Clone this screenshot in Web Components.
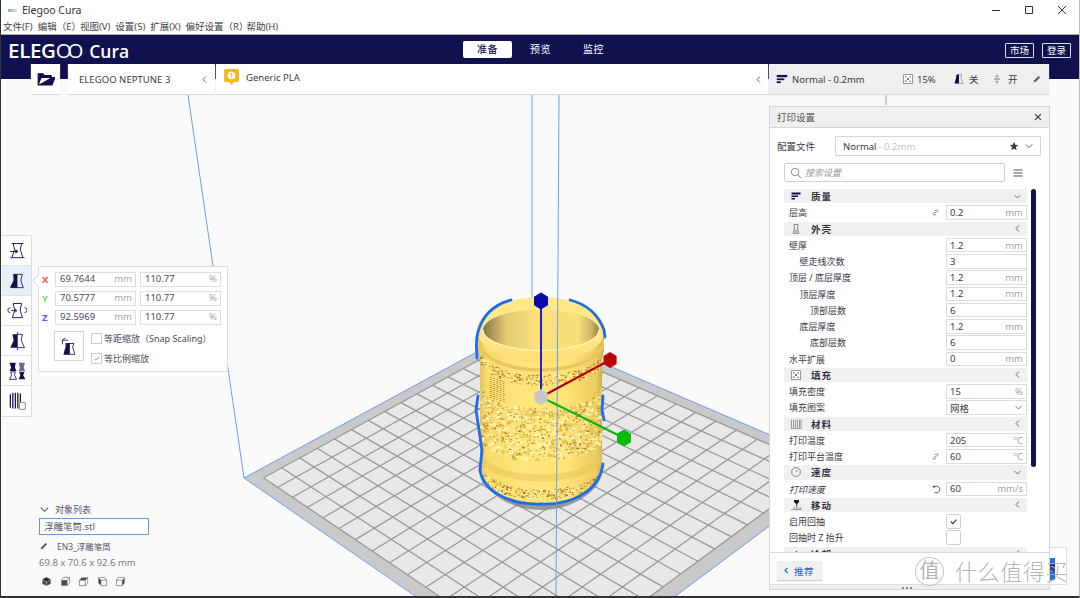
<!DOCTYPE html>
<html lang="zh"><head><meta charset="utf-8"><title>Elegoo Cura</title>
<style>
html,body{margin:0;padding:0;width:1080px;height:598px;overflow:hidden;background:#fafafa;font-family:"Noto Sans","Noto Sans CJK SC",sans-serif;color:#3a3a46}
x-app{display:flex}
</style></head><body>
<x-app>
  <x-titlebar>Elegoo Cura</x-titlebar>
  <x-menubar></x-menubar>
  <x-header></x-header>
  <x-stage>
    <x-scene></x-scene>
    <x-stagebar></x-stagebar>
    <x-toolrail></x-toolrail>
    <x-scalepanel></x-scalepanel>
    <x-objectlist></x-objectlist>
    <x-slicebox></x-slicebox>
    <x-printsettings>
      <x-cat icon="quality" open>质量</x-cat>
      <x-row link value="0.2" unit="mm">层高</x-row>
      <x-cat icon="shell">外壳</x-cat>
      <x-row value="1.2" unit="mm">壁厚</x-row>
      <x-row indent="1" value="3">壁走线次数</x-row>
      <x-row value="1.2" unit="mm">顶层 / 底层厚度</x-row>
      <x-row indent="1" value="1.2" unit="mm">顶层厚度</x-row>
      <x-row indent="2" value="6">顶部层数</x-row>
      <x-row indent="1" value="1.2" unit="mm">底层厚度</x-row>
      <x-row indent="2" value="6">底部层数</x-row>
      <x-row value="0" unit="mm">水平扩展</x-row>
      <x-cat icon="infill">填充</x-cat>
      <x-row value="15" unit="%">填充密度</x-row>
      <x-row select value="网格">填充图案</x-row>
      <x-cat icon="material">材料</x-cat>
      <x-row value="205" unit="°C">打印温度</x-row>
      <x-row link value="60" unit="°C">打印平台温度</x-row>
      <x-cat icon="speed" open>速度</x-cat>
      <x-row reset italic value="60" unit="mm/s">打印速度</x-row>
      <x-cat icon="travel">移动</x-cat>
      <x-row check="on">启用回抽</x-row>
      <x-row check="off">回抽时 Z 抬升</x-row>
      <x-cat icon="cooling">冷却</x-cat>
    </x-printsettings>
    <x-watermark></x-watermark>
  </x-stage>
</x-app>
<script>
const NAVY='#12114f';
const P={
 move:`<path d="M5.500 3H19.500M7.500 3L9 10L6 20M17.500 3L16 10L19 20M4 20H21" fill="none" stroke="${NAVY}" stroke-width="1.100"/><path d="M4 12.500H12M10 10.500L12.500 12.500L10 14.500" fill="none" stroke="${NAVY}" stroke-width="1.300"/>`,
 scale:`<path d="M7.500 4H18.500L16.500 11L19.500 20H6.500L9.200 11Z" fill="none" stroke="${NAVY}" stroke-width="1"/><path d="M8.800 4H12.500V20H3.500L7.500 12Z" fill="${NAVY}"/>`,
 rotate:`<path d="M7.500 3H17.500L15.800 11L18.500 20H6.500L9.200 11Z" fill="none" stroke="${NAVY}" stroke-width="1.100"/><path d="M4 8A3 3 0 1 0 4 14M21 8A3 3 0 1 1 21 14M5 11.500H11M9.500 9.500L12 11.500L9.500 13.500" fill="none" stroke="${NAVY}" stroke-width="1"/>`,
 mirror:`<path d="M12.500 1V23" stroke="${NAVY}" stroke-width="1"/><path d="M6.500 4H12V20H4L8 11Z" fill="${NAVY}"/><path d="M13 4H18.500L17 11L21 20H13" fill="none" stroke="${NAVY}" stroke-width="1"/>`,
 support:`<path d="M3 2H10.500L9.500 8L11.500 12H3L5 8Z" fill="${NAVY}"/><path d="M14 2H21.500L20 8L22 12H14L15.500 8Z" fill="#6d6d8c"/><path d="M4.500 13H10L9 17L11.500 22H3L5.500 17Z" fill="none" stroke="${NAVY}" stroke-width="1"/><path d="M14.500 13H21L19.500 17L22 22H14L16 17Z" fill="${NAVY}"/>`,
 per:`<path d="M4 4V20M7 2V21M10 2V21M13 2V21M16 3V14" stroke="${NAVY}" stroke-width="1.500"/><path d="M15 14H22V22H15Z" fill="#fff" stroke="#8b8b9e" stroke-width="1.200"/>`,
 snap:`<path d="M8 9H18L16.300 13L19 22H6L8.700 13Z" fill="none" stroke="${NAVY}" stroke-width="1"/><path d="M8.800 9H13V22H5.500L8 13Z" fill="${NAVY}"/><path d="M4 10V5H11M7.500 2.500L4 5" fill="none" stroke="${NAVY}" stroke-width="1"/>`,
 folder:`<path d="M1.500 20V5H8L10 7.500H19V10H5.500L1.500 20H20L24 10H19" fill="${NAVY}" stroke="${NAVY}" stroke-width="1.400" stroke-linejoin="round"/>`,
 quality:`<path d="M3 5H21V9H3Z" fill="${NAVY}"/><path d="M3 11H16V14H3Z" fill="${NAVY}"/><path d="M3 16H10V19H3Z" fill="${NAVY}"/>`,
 shell:`<path d="M8 3H16L15 10L18 21H6L9 10Z" fill="none" stroke="#6a6a78" stroke-width="1.500"/><path d="M6 21L9 13H15L18 21Z" fill="#b4b4bc"/>`,
 infill:`<path d="M3 3H21V21H3Z" fill="#fff" stroke="#77778a" stroke-width="1.500"/><path d="M6 6L10 6L8 10ZM18 6V10L14 8ZM6 18V14L10 16ZM18 18H14L16 14ZM10 10H14V14H10Z" fill="#77778a"/>`,
 material:`<path d="M3 3V21M7 3V21M11 3V21M15 3V21M19 3V21M22 3V21" stroke="#666672" stroke-width="1.300"/><path d="M2 21H23" stroke="#666672" stroke-width="1"/>`,
 speed:`<circle cx="12" cy="12" r="9" fill="none" stroke="#5a5a68" stroke-width="1.300"/><path d="M12 12L16 7" stroke="#5a5a68" stroke-width="1.500"/><path d="M12 4V6M20 12H18M4 12H6" stroke="#5a5a68" stroke-width="1"/>`,
 travel:`<path d="M8 2H18V6L14.500 10V15H12.500V10L8 6Z" fill="${NAVY}"/><path d="M2 21H22V18H9L6 16" fill="none" stroke="#8a8a96" stroke-width="1.800"/>`,
 cooling:`<path d="M12 12C8 4 18 3 13 11C22 9 21 18 13 13C14 22 5 20 11 13C3 15 3 6 12 12Z" fill="#5a5a68"/>`,
 star:`<path d="M12 2L15 9L22 9.700L16.800 14.500L18.300 22L12 18L5.700 22L7.200 14.500L2 9.700L9 9Z" fill="#3a3a4a"/>`,
 down:`<path d="M4 8L12 16L20 8" fill="none" stroke="#555" stroke-width="2.200"/>`,
 left:`<path d="M16 4L8 12L16 20" fill="none" stroke="#555" stroke-width="2.400"/>`,
 leftblue:`<path d="M15 5L8 12L15 19" fill="none" stroke="#1f63c4" stroke-width="3"/>`,
 search:`<circle cx="10" cy="10" r="7.500" fill="none" stroke="#777" stroke-width="1.600"/><path d="M15.500 15.500L22 22" stroke="#777" stroke-width="1.800"/>`,
 menu:`<path d="M3 6H21M3 12H21M3 18H21" stroke="#555" stroke-width="2.400"/>`,
 close:`<path d="M5 5L19 19M19 5L5 19" stroke="#444" stroke-width="3"/>`,
 link:`<path d="M11 13L14 10M9 12L6 15A3 3 0 0 0 10 19L13 16M15 12L18 9A3 3 0 0 0 14 5L11 8" fill="none" stroke="#6a6a6a" stroke-width="2.200"/>`,
 reset:`<path d="M7 8A8 8 0 1 1 9 20" fill="none" stroke="#555" stroke-width="2.300"/><path d="M3 5L9 3.500L8 11Z" fill="#555"/>`,
 pencil:`<path d="M4 20L5.500 15L16 4.500L19.500 8L9 18.500Z" fill="#55555f"/>`,
 check:`<path d="M6 12L10.500 16.500L18.500 8" fill="none" stroke="#3a3a4a" stroke-width="2.600"/>`,
 checkblue:`<path d="M6 12L10.500 16.500L18.500 8" fill="none" stroke="#5c8fdc" stroke-width="2.200"/>`,
 cubeFull:`<path d="M12 2L21 7V17L12 22L3 17V7Z" fill="#4a4a55"/><path d="M12 12V22M3 7L12 12L21 7" stroke="#fff" stroke-width="1"/>`,
 cubeFront:`<path d="M3 9H16V21H3Z" fill="#4a4a55"/><path d="M3 9L8 3H21V15L16 21M16 9L21 3" fill="none" stroke="#55555f" stroke-width="1.300"/>`,
 cubeTop:`<path d="M3 9L8 3H21L16 9Z" fill="#4a4a55"/><path d="M3 9H16V21H3ZM16 9L21 3V15L16 21" fill="none" stroke="#55555f" stroke-width="1.300"/>`,
 cubeLeft:`<path d="M3 3L9 9V21L3 15Z" fill="#4a4a55"/><path d="M3 3H16L21 9V21H9M9 9H21" fill="none" stroke="#55555f" stroke-width="1.300"/>`,
 cubeRight:`<path d="M16 9L21 3V15L16 21Z" fill="#4a4a55"/><path d="M3 9L8 3H21M3 9H16V21H3Z" fill="none" stroke="#55555f" stroke-width="1.300"/>`,
 support2:`<path d="M7 3H12V21H6L3 21L6 10Z" fill="${NAVY}"/><path d="M12 3H17L16 10L20 21H12" fill="none" stroke="#8a8a96" stroke-width="1.400"/>`,
 split:`<path d="M12 3V8M12 16V21M6 12H18" stroke="#6a7488" stroke-width="2"/><path d="M9 6L12 9L15 6M9 18L12 15L15 18" fill="none" stroke="#6a7488" stroke-width="1.200"/>`
};
const ic=(n,w=16,h=w)=>`<svg width="${w}" height="${h}" viewBox="0 0 24 24" style="display:block;flex:none">${P[n]}</svg>`;
function def(tag,html){
  customElements.define(tag,class extends HTMLElement{
    constructor(){super();const r=this.attachShadow({mode:'open'});r.innerHTML=typeof html==='function'?html(this):html}
  });
}
const FONT='"Noto Sans","Noto Sans CJK SC",sans-serif';

def('x-app',`<style>:host{display:flex;flex-direction:column;width:1080px;height:598px;overflow:hidden;font-family:${FONT};box-sizing:border-box;border-left:1px solid #333;border-right:1px solid #bbb;border-bottom:2px solid #333}</style><slot></slot>`);

def('x-titlebar',`<style>
:host{display:flex;align-items:center;height:20px;background:#fff;font-size:10.500px;color:#333;flex:none}
.logo{width:9px;height:3px;margin:0 5px 0 7px;background:linear-gradient(90deg,#8aa0d8,#dde6f6)}
.sp{flex:1}.w{display:flex;align-items:center;justify-content:center;width:33px;height:20px}
.w:last-child{margin-right:1px}
</style><i class="logo"></i><slot></slot><span class="sp"></span>
<span class="w"><svg width="10" height="10" viewBox="0 0 10 10"><path d="M1 5.500H9" stroke="#333" stroke-width="1"/></svg></span>
<span class="w"><svg width="10" height="10" viewBox="0 0 10 10"><path d="M1.500 1.500H8.500V8.500H1.500Z" fill="none" stroke="#333" stroke-width="1"/></svg></span>
<span class="w"><svg width="10" height="10" viewBox="0 0 10 10"><path d="M1 1L9 9M9 1L1 9" stroke="#333" stroke-width="1"/></svg></span>`);

def('x-menubar',`<style>
:host{display:flex;height:14px;background:#fff;font-size:9.500px;line-height:14px;color:#444;padding-left:2px;flex:none;white-space:nowrap;gap:5px;border-bottom:1px solid #a8a8b0}
.a{margin-right:-6px}.b{margin-right:-7px}
</style><span>文件(F)</span><span class="a">编辑（E）</span><span>视图(V)</span><span>设置(S)</span><span>扩展(X)</span><span class="b">偏好设置（R）</span><span>帮助(H)</span>`);

def('x-header',`<style>
:host{display:flex;align-items:flex-start;height:44px;background:${NAVY};color:#fff;position:relative;flex:none;margin-bottom:-44px;z-index:1}
.logo{position:absolute;left:7px;top:1px;display:flex;align-items:baseline;font:600 20.500px/28px "Open Sans",sans-serif;letter-spacing:-.3px;white-space:nowrap}
.oo{letter-spacing:-4.200px;font-weight:400;margin-right:10px}
.cura{font:600 17.500px/28px "Open Sans",sans-serif;letter-spacing:0}
.tabs{position:absolute;left:462px;top:6px;display:flex;font-size:10px;line-height:17px}
.tabs span{width:49px;height:17px;text-align:center;border-radius:2px;margin-right:4px;letter-spacing:.6px}
.tabs .on{background:#fff;color:${NAVY};font-weight:500}
.btns{position:absolute;left:1004px;top:8px;display:flex;gap:8px}
.btns span{width:27px;height:13px;border:1px solid #dcdcec;border-radius:1px;text-align:center;font-size:9.500px;line-height:13px}
</style>
<div class="logo"><span>ELEG</span><span class="oo">OO</span><span class="cura">Cura</span></div>
<div class="tabs"><span class="on">准备</span><span>预览</span><span>监控</span></div>
<div class="btns"><span>市场</span><span>登录</span></div>`);

def('x-stage',`<style>:host{display:block;position:relative;flex:1;min-height:0;overflow:hidden}</style><slot></slot>`);

def('x-stagebar',`<style>
:host{position:absolute;left:30px;top:29px;display:flex;height:30px;z-index:2;font-size:9.500px;color:#3a3a46}
.b{background:#fff;display:flex;align-items:center;height:30px;box-shadow:0 1px 1px #dcdcdc}
.f{width:29px;justify-content:center;margin-right:8px}
.p{width:147px;box-sizing:border-box;padding:0 6px 0 11px;justify-content:space-between;letter-spacing:.05px;margin-right:1px}
.m{width:552px;box-sizing:border-box;padding:0 5px 0 8px;margin-right:1px}
.m .t{margin-left:7px;flex:1;margin-top:-3px}
.q{width:280px;box-sizing:border-box;background:#efefef;padding:0 7px 0 6px;font-size:9.500px}
.q span{white-space:nowrap}
</style>
<div class="b f">${ic('folder',18)}</div>
<div class="b p"><span>ELEGOO NEPTUNE 3</span>${ic('left',9)}</div>
<div class="b m"><svg width="15" height="17" viewBox="0 0 15 17" style="margin-top:-3px;flex:none"><path d="M0 1.500Q0 0 1.500 0H13.500Q15 0 15 1.500V11.500Q15 13 13.500 13H10L7.500 16L5 13H1.500Q0 13 0 11.500Z" fill="#f5b922"/><circle cx="7.500" cy="6.500" r="3.800" fill="#fff"/><text x="7.500" y="9" font-size="6.500" text-anchor="middle" fill="#c08a10" font-family="Noto Sans">1</text></svg><span class="t">Generic PLA</span>${ic('left',9)}</div>
<div class="b q">${ic('quality',14)}<span style="margin-left:3px;width:110px">Normal - 0.2mm</span>${ic('infill',12)}<span style="margin-left:3px;width:36px">15%</span>${ic('support2',12)}<span style="margin-left:4px;width:22px">关</span>${ic('split',12)}<span style="margin-left:5px;width:24px">开</span>${ic('pencil',10)}</div>`);

const rail=['move','scale','rotate','mirror','support','per'];
def('x-toolrail',`<style>
:host{position:absolute;left:1px;top:200px;width:29px;background:#fff;border:1px solid #dcdcdc;border-left:0;z-index:2;border-radius:0 2px 2px 0;display:flex;flex-direction:column}
div{height:30px;display:flex;align-items:center;justify-content:center;border-bottom:1px solid #e2e2e2;box-sizing:border-box}
div:last-child{border:0}.on{background:#e5f0fa}
</style>${rail.map((n,i)=>`<div class="${i==1?'on':''}">${ic(n,20)}</div>`).join('')}`);

def('x-scalepanel',`<style>
:host{position:absolute;left:37px;top:231px;width:190px;height:106px;box-sizing:border-box;background:#fff;border:1px solid #dcdcdc;z-index:2;font-size:10px;color:#4a4a55}
.n{position:absolute;left:-5px;top:9px;width:8px;height:8px;background:#fff;border-left:1px solid #dcdcdc;border-bottom:1px solid #dcdcdc;transform:rotate(45deg)}
.g{display:grid;grid-template-columns:9px 81px 81px;gap:4px;margin:5px 0 0 3px;position:relative}
.a{font-weight:700;font-size:9.500px;line-height:15px}
.f{height:15px;box-sizing:border-box;border:1px solid #dedede;display:flex;justify-content:space-between;padding:0 3px 0 4px;line-height:12px;font-size:9.500px}
.f b{font-weight:400;color:#a8a8a8}
.l{display:flex;margin:6px 0 0 15px;position:relative}
.s{width:30px;height:30px;box-sizing:border-box;border:1px solid #d6d6d6;display:flex;align-items:center;justify-content:center;margin-right:7px}
.c{display:flex;align-items:center;height:11px;margin:2px 0 9px;font-size:9px;white-space:nowrap}
.c i{width:11px;height:11px;box-sizing:border-box;border:1px solid #ccc;margin-right:2px;display:flex}
</style><span class="n"></span>
<div class="g">
${[['X','#ee5555','69.7644'],['Y','#77dd55','70.5777'],['Z','#5555ee','92.5969']].map(r=>`<span class="a" style="color:${r[1]}">${r[0]}</span><span class="f">${r[2]}<b>mm</b></span><span class="f">110.77<b>%</b></span>`).join('')}
</div>
<div class="l"><div class="s">${ic('snap',20)}</div><div><div class="c"><i></i>等距缩放（Snap Scaling）</div><div class="c"><i>${ic('checkblue',9)}</i>等比例缩放</div></div></div>`);

def('x-objectlist',`<style>
:host{position:absolute;left:38px;top:466px;width:140px;z-index:2;font-size:9.500px;color:#55555f}
.h{display:flex;align-items:center;height:17px;white-space:nowrap;font-size:9px}
.h span{margin-left:5px}
.i{width:110px;height:17px;box-sizing:border-box;border:1px solid #5d9be8;background:#fff;padding:0 4px;line-height:15px;font-size:9.500px}
.e{display:flex;align-items:center;height:16px;margin-top:3px;font-size:8.500px;white-space:nowrap}
.e span{margin-left:8px}
.d{font-size:9.500px;margin-top:1px;height:16px;line-height:16px;color:#7a7a82;white-space:nowrap}
.v{display:flex;gap:7.500px;margin:5px 0 0 2px}
</style>
<div class="h">${ic('down',11)}<span>对象列表</span></div>
<div class="i">浮雕笔筒.stl</div>
<div class="e">${ic('pencil',10)}<span>EN3_浮雕笔筒</span></div>
<div class="d">69.8 x 70.6 x 92.6 mm</div>
<div class="v">${['cubeFull','cubeFront','cubeTop','cubeLeft','cubeRight'].map(n=>ic(n,11)).join('')}</div>`);

def('x-slicebox',`<style>
:host{position:absolute;left:1048px;top:512px;width:18px;height:38px;box-sizing:border-box;background:#fff;border:1px solid #ddd;border-left:0;z-index:1;overflow:hidden}
b{position:absolute;left:1px;top:10px;width:5px;height:22px;background:#1f6fe0}
i{position:absolute;left:1px;top:16px;width:5px;height:8px;background:#2a3f90}
</style><b></b><i></i>`);

def('x-printsettings',`<style>
:host{position:absolute;left:768px;top:71px;width:281px;height:484px;box-sizing:border-box;background:#fff;border:1px solid #d6d6d6;z-index:3;display:flex;flex-direction:column;font-size:9.500px;color:#3a3a46}
.t{height:21px;background:#efefef;border-bottom:1px solid #d6d6d6;display:flex;align-items:center;justify-content:space-between;padding:0 6px 0 7px;flex:none;color:#555;box-sizing:border-box}
.p{display:flex;align-items:center;height:20px;margin-top:8px;padding-left:7px;flex:none}
.dd{width:206px;height:20px;margin-left:20px;box-sizing:border-box;border:1px solid #d6d6d6;border-radius:1px;display:flex;align-items:center;padding:0 6px 0 7px;font-size:9.500px}
.dd em{font-style:normal;color:#c4c4c4;margin-left:2px;flex:1}
.s{display:flex;align-items:center;height:19px;margin-top:7px;padding-left:14px;flex:none}
.si{width:221px;height:19px;box-sizing:border-box;border:1px solid #d0d0d0;border-radius:2px;display:flex;align-items:center;padding-left:5px;font-style:italic;color:#9a9a9a;font-size:9px}
.si span{margin-left:3px}
.ls{height:363px;margin-top:7px;position:relative;overflow:hidden;flex:none;padding-left:14px}
.g{width:243px;display:grid;grid-auto-rows:16.250px}
.sb{position:absolute;left:261px;top:0;width:5px;height:278px;background:${NAVY};border-radius:3px}
.f{flex:none;height:32px;border-top:1px solid #dcdcdc;box-sizing:border-box;padding:8px 0 0 7px}
.r{display:flex;align-items:center;width:45px;height:19px;background:#f0f0f0;box-shadow:0 1px 1px #d0d0d0;color:#2a62bc;font-size:9.500px;letter-spacing:.5px;padding-left:5px;box-sizing:border-box}
.r span{margin-left:3px}
.e{flex:1;background:#efefef;border-top:1px solid #dcdcdc;position:relative}
.e i{position:absolute;left:132px;top:2px;width:11px;height:2px;background:radial-gradient(circle at 1px 1px,#888 1px,transparent 1.200px) 0 0/4px 2px}
</style>
<div class="t"><span>打印设置</span>${ic('close',10)}</div>
<div class="p"><span>配置文件</span><div class="dd">Normal<em>- 0.2mm</em>${ic('star',10)}<span style="width:5px"></span>${ic('down',10)}</div></div>
<div class="s"><div class="si">${ic('search',12)}<span>搜索设置</span></div><span style="margin-left:7px">${ic('menu',12)}</span></div>
<div class="ls"><div class="g"><slot></slot></div><div class="sb"></div></div>
<div class="f"><div class="r">${ic('leftblue',9)}<span>推荐</span></div></div>
<div class="e"><i></i></div>`);

def('x-cat',h=>`<style>
:host{display:block;box-sizing:border-box;height:16.250px;padding-bottom:2px}
.b{display:flex;align-items:center;height:14.250px;background:#f0f0f0;padding:0 5px 0 6px}
.t{margin-left:9px;flex:1;font-weight:700;font-size:9.500px;letter-spacing:1px;color:#33333f}
</style><div class="b">${ic(h.getAttribute('icon'),12)}<span class="t"><slot></slot></span>${ic(h.hasAttribute('open')?'down':'left',9)}</div>`);

def('x-row',h=>{
 const g=a=>h.getAttribute(a),ind=+(g('indent')||0);
 let ctl;
 if(g('check'))ctl=`<div class="ck">${g('check')=='on'?ic('check',11):''}</div>`;
 else if(h.hasAttribute('select'))ctl=`<div class="fd">${g('value')}${ic('down',9)}</div>`;
 else ctl=`<div class="fd"><span>${g('value')}</span><b>${g('unit')||''}</b></div>`;
 return `<style>
:host{display:flex;align-items:flex-start;height:16.250px;font-size:9px;color:#3a3a46;white-space:nowrap;${h.hasAttribute('italic')?'font-style:italic;':''}}
.l{width:${162-5-ind*10.500}px;margin-left:${5+ind*10.500}px;line-height:15px;display:flex}
.a{width:10px;margin-right:5px;height:15px;display:flex;align-items:center}
.sp{flex:1}
.fd{width:81px;height:14.500px;box-sizing:border-box;border:1px solid #dcdcdc;background:#fff;display:flex;justify-content:space-between;align-items:center;padding:0 3px 0 3px;font-size:9.500px;font-style:normal}
.fd b{font-weight:400;color:#a2a2a2}
.ck{width:15px;height:15px;box-sizing:border-box;border:1px solid #d0d0d0;border-radius:2px;display:flex;align-items:center;justify-content:center;background:#fff}
</style><span class="l"><span><slot></slot></span><span class="sp"></span>${h.hasAttribute('link')?`<span class="a">${ic('link',9)}</span>`:h.hasAttribute('reset')?`<span class="a">${ic('reset',10)}</span>`:''}</span>${ctl}`;
});

def('x-watermark',`<style>
:host{position:absolute;left:914px;top:521px;z-index:5;display:flex;align-items:center;pointer-events:none;color:rgba(170,170,170,.9);white-space:nowrap}
.c{width:29px;height:29px;border:1.500px solid rgba(185,185,185,.8);border-radius:50%;box-sizing:border-box;font-size:20px;line-height:25px;text-align:center;background:rgba(255,255,255,.5)}
.t{margin-left:11px;font-size:22px;line-height:30px;letter-spacing:.6px;font-weight:300}
</style><span class="c">值</span><span class="t">什么值得买</span>`);

/* 3D scene */
def('x-scene',()=>{
 const H=(p)=>{
  const [[x0,y0],[x1,y1],[x2,y2],[x3,y3]]=p;
  const dx1=x1-x2,dx2=x3-x2,sx=x0-x1+x2-x3,dy1=y1-y2,dy2=y3-y2,sy=y0-y1+y2-y3;
  const d=dx1*dy2-dx2*dy1,g=(sx*dy2-dx2*sy)/d,h=(dx1*sy-sx*dy1)/d;
  const a=x1-x0+g*x1,b=x3-x0+h*x3,c=x0,e=y1-y0+g*y1,f=y3-y0+h*y3,i=y0;
  return (u,v)=>{const w=g*u+h*v+1;return [(a*u+b*v+c)/w,(e*u+f*v+i)/w]};
 };
 const q=[[520,328],[846,468],[550,689],[243,478]];
 const M=H(q);
 const pt=a=>a.map(n=>n.toFixed(1)).join(',');
 const m=.035,N=16;
 let lines='';
 for(let k=0;k<=N;k++){const t=m+(1-2*m)*k/N;
  lines+=`<path d="M${pt(M(t,m))}L${pt(M(t,1-m))}M${pt(M(m,t))}L${pt(M(1-m,t))}"/>`;}
 const quad=(a,b,c,d)=>[M(a,c),M(b,c),M(b,d),M(a,d)].map(pt).join(' ');
 let seed=7;const R=()=>(seed=(seed*16807)%2147483647)/2147483647;
 let tex='';
 const rect=(x,y,w,h,c)=>`<rect x="${x.toFixed(1)}" y="${y.toFixed(1)}" width="${w.toFixed(1)}" height="${h.toFixed(1)}" fill="${c}"/>`;
 const lights=['#fff2a0','#fff6b4','#ffeb8c','#f0cc5e','#e8c052'];
 const darks=['#b08a34','#96752c','#c98a30','#7d6428','#c4662a'];
 const spot=(y0,y1,n,ry,sc,dk)=>{for(let i=0;i<n;i++){const X=R()*2-1,x=540+X*61,yy=y0+R()*(y1-y0)+ry*Math.sqrt(1-X*X);
   tex+=rect(x,yy,(1+R()*3)*sc,(.8+R()*2)*sc,lights[Math.floor(R()*lights.length)]);}
  for(let i=0;i<dk;i++){const X=R()*2-1,x=540+X*61,yy=y0+R()*(y1-y0)+ry*Math.sqrt(1-X*X);
   tex+=rect(x,yy,.8+R()*1.400,.6+R()*.7,darks[Math.floor(R()*darks.length)]);}};
 spot(350,361,240,24,.7,170);spot(384,436,700,24,1.200,330);spot(463,473,240,26,.7,180);
 let col='';for(let i=0;i<5;i++){for(let j=0;j<11;j++)col+=`<rect x="${489+i*3.200}" y="${377+i+j*2}" width="${(1.200+R()).toFixed(1)}" height="1" fill="#c69a3a"/>`}
 const hex=(x,y,r,c)=>{let a=[];for(let i=0;i<6;i++){const t=Math.PI/3*i-Math.PI/2;a.push((x+r*Math.cos(t)*.95).toFixed(1)+','+(y+r*Math.sin(t)).toFixed(1))}return `<polygon points="${a.join(' ')}" fill="${c}"/>`};
 const OUT='M477 332L477 350L479 360V470C482 492 510 504 540 504C570 504 598 492 601 470V360L603 350V332Z';
 return `<style>:host{position:absolute;inset:0;display:block}svg{display:block}</style>
<svg width="1080" height="563" viewBox="0 35 1080 563">
<defs>
<linearGradient id="body" x1="0" x2="1"><stop offset="0" stop-color="#dcbe5a"/><stop offset=".07" stop-color="#f8da6c"/><stop offset=".35" stop-color="#ffe67c"/><stop offset=".7" stop-color="#ffe478"/><stop offset=".94" stop-color="#eccb60"/><stop offset="1" stop-color="#c4a64e"/></linearGradient>
<linearGradient id="inner" x1="0" x2="1"><stop offset="0" stop-color="#857548"/><stop offset=".07" stop-color="#a8945a"/><stop offset=".2" stop-color="#e3ca72"/><stop offset=".45" stop-color="#f9e07c"/><stop offset=".82" stop-color="#f9df7a"/><stop offset=".94" stop-color="#cdb364"/><stop offset="1" stop-color="#8f8050"/></linearGradient>
<linearGradient id="rim" x1="0" x2="0" y1="0" y2="1"><stop offset="0" stop-color="#ffe985"/><stop offset=".6" stop-color="#ffe88a"/><stop offset="1" stop-color="#fbdc72"/></linearGradient>
<clipPath id="mug"><path d="${OUT}"/></clipPath>
</defs>
<rect x="0" y="35" width="1080" height="563" fill="#fafafa"/>
<polygon points="${q.map(pt).join(' ')}" fill="#c9c9c9"/>
<polygon points="${quad(m,1-m,m,1-m)}" fill="#e8e8e8"/>
<g stroke="#9a9a9a" stroke-width="1.300" fill="none">${lines}</g>
<g stroke="#6f9fec" stroke-width="1" fill="none">
<path d="M187 95L243 478L417 598M672 598L846 468"/>
<path d="M243 478L520 328L846 468"/>
<path d="M531 95V330"/>
<path d="M885 95V105"/>
</g>
<path d="M484 474C488 494 515 507 540 507C565 507 592 494 598 474" fill="none" stroke="#777" stroke-width="6" opacity=".7"/>
<path d="${OUT}" fill="url(#body)"/>
<g clip-path="url(#mug)">
<path d="M478 388A62 26 0 0 0 602 388" stroke="#eccc64" stroke-width="5" fill="none" opacity=".8"/>
<path d="M478 452A62 26 0 0 0 602 452" stroke="#e8c65c" stroke-width="7" fill="none" opacity=".55"/>
${tex}${col}
<path d="M477 340A63 30 0 0 0 603 340" stroke="#e9c75e" stroke-width="3.500" fill="none"/>
</g>
<ellipse cx="540" cy="330" rx="64" ry="33" fill="url(#rim)"/>
<ellipse cx="540" cy="330" rx="58" ry="20.500" fill="url(#inner)"/>
<path d="M482 330A58 20.500 0 0 0 598 330" fill="none" stroke="#fff2a6" stroke-width="1.500"/>
<g fill="none" stroke="#1a6cf0" stroke-width="2.800" stroke-linecap="round">
<path d="M510 300C495 304 482 314 477 332C474 342 476 352 476 358"/>
<path d="M569 300C585 304 597 314 603 330L604 337"/>
<path d="M477 396L475 410L478 430L481 450L479 470C482 492 510 505 540 504C570 505 598 492 602 464"/>
<path d="M602 396L601 410L603 420"/>
</g>
<path d="M558 95L555 598" stroke="#6f9fec" stroke-width="1" fill="none"/>
<path d="M540 397V305" stroke="#2222b8" stroke-width="2"/>
<path d="M540 397L609 360" stroke="#b40000" stroke-width="2"/>
<path d="M540 397L623 438" stroke="#0cb50c" stroke-width="2"/>
${hex(540,301,8.500,'#0a0aa8')}${hex(609,360,8,'#b80808')}${hex(623,438,8.500,'#0cb80c')}${hex(540,397,8,'#c8c8c8')}
</svg>`;
});
</script>
</body></html>
